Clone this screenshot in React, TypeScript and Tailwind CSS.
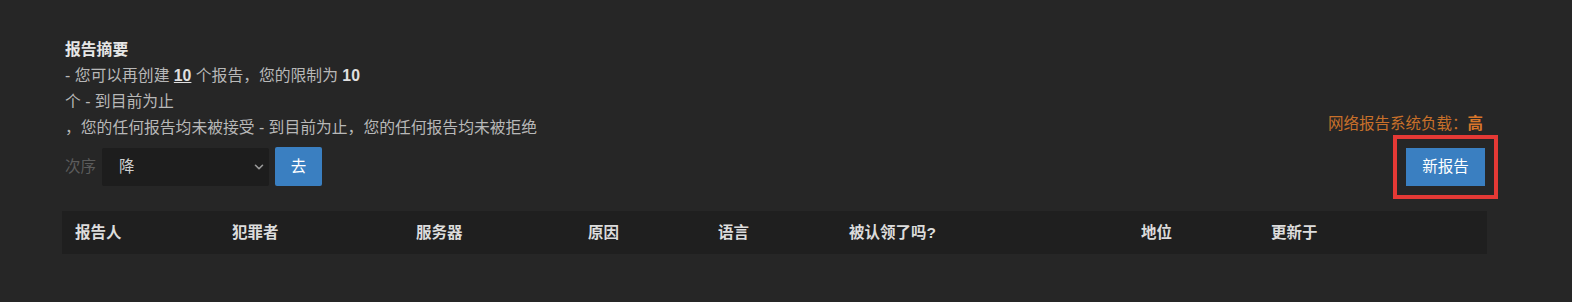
import { ChevronDown } from "lucide-react"

const columns = [
  { label: "报告人", w: "w-[157px]" },
  { label: "犯罪者", w: "w-[184px]" },
  { label: "服务器", w: "w-[172px]" },
  { label: "原因", w: "w-[130px]" },
  { label: "语言", w: "w-[131px]" },
  { label: "被认领了吗?", w: "w-[292px]" },
  { label: "地位", w: "w-[130px]" },
  { label: "更新于", w: "flex-1" },
]

export default function App() {
  return (
    <div className="h-[302px] w-[1572px] bg-[#262626] font-['Liberation_Sans','Noto_Sans_CJK_SC',sans-serif] text-[15.5px]">
      <div className="ml-[62px] w-[1425px] pt-[37px]">
        {/* Summary + system load */}
        <div className="flex items-end justify-between pl-[3px] leading-[26px]">
          <div className="text-[15.8px] text-[#b8b8b8]">
            <div className="font-bold text-[#e6e6e6]">报告摘要</div>
            <div>
              - 您可以再创建 <b className="text-[#e0e0e0] underline">10</b> 个报告，您的限制为{" "}
              <b className="text-[#e0e0e0]">10</b>
            </div>
            <div>个 - 到目前为止</div>
            <div>，您的任何报告均未被接受 - 到目前为止，您的任何报告均未被拒绝</div>
          </div>
          <div className="mb-[4px] pr-[4px] text-[#c8702a]">
            网络报告系统负载：<b className="text-[#d9762a]">高</b>
          </div>
        </div>

        {/* Order + actions */}
        <div className="mt-[6px] flex items-center justify-between pl-[3px]">
          <div className="flex items-center">
            <span className="text-[#5c5c5c]">次序</span>
            <div className="ml-[6px] flex h-[38px] w-[167px] items-center justify-between rounded-[2px] bg-[#1d1d1d] pl-[17px] pr-[3px] text-[#cfcfcf]">
              <span>降</span>
              <ChevronDown size={14} strokeWidth={2.75} className="text-[#9a9a9a]" />
            </div>
            <button className="ml-[6px] h-[39px] w-[47px] rounded-[2px] bg-[#3a7fc1] text-white">去</button>
          </div>
          <button className="mr-[2px] h-[38px] w-[79px] bg-[#3a7fc1] text-white outline-4 outline-offset-[9px] outline-[#e53935]">
            新报告
          </button>
        </div>

        {/* Table header */}
        <div className="mt-[25px] flex h-[43px] items-center bg-[#1f1f1f] font-bold text-[#dcdcdc]">
          {columns.map((c) => (
            <div key={c.label} className={`${c.w} pl-[13px]`}>
              {c.label}
            </div>
          ))}
        </div>
      </div>
    </div>
  )
}
